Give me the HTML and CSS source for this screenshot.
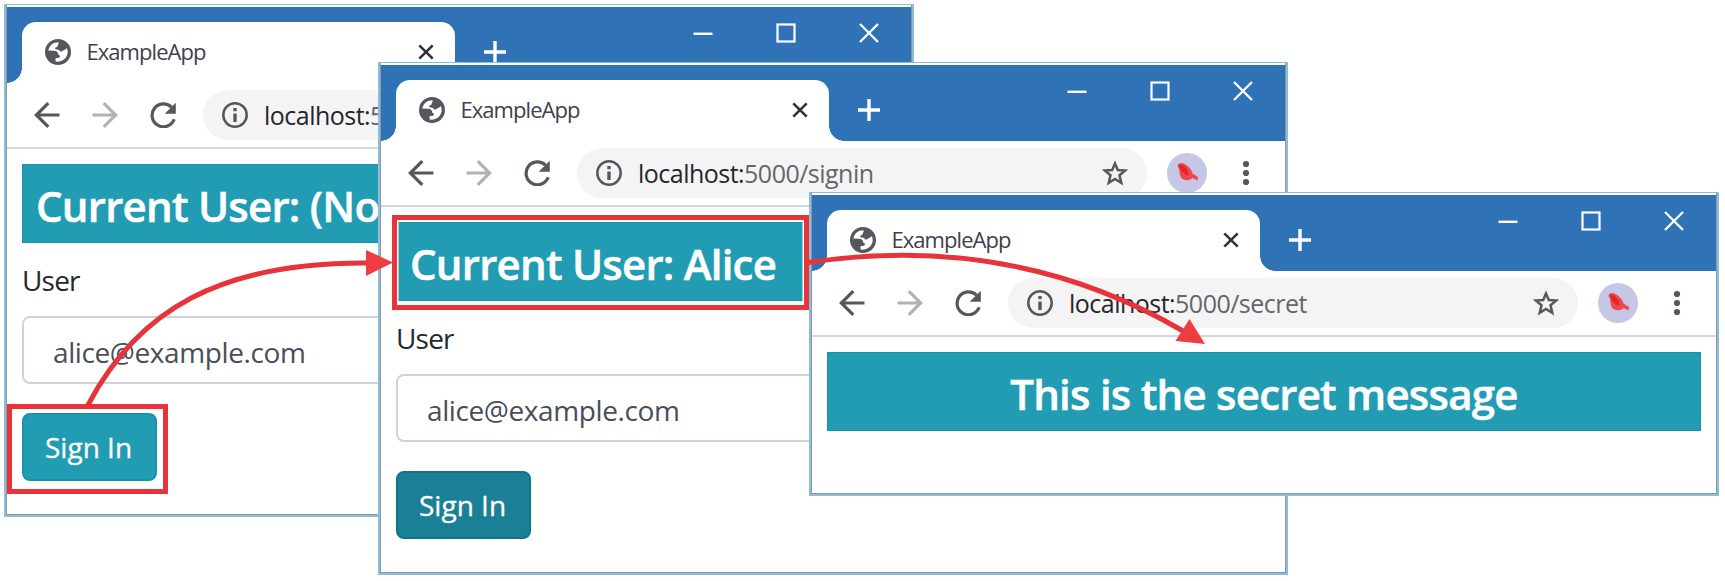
FILE: index.html
```html
<!DOCTYPE html>
<html lang="en">
<head>
<meta charset="utf-8">
<title>ExampleApp</title>
<link rel="stylesheet" href="styles.css">
</head>
<body>
<svg class="defs" aria-hidden="true">
  <symbol id="globe" viewBox="0 0 26 26">
    <circle cx="13" cy="13" r="13" fill="#54585d"/>
    <path d="M13.500 3.300C8 3.300 4.200 6.800 3.300 11.500L9 11.800C12 11.800 13.500 13.500 13.200 15.800C15.300 16 15.500 18 14 18.800L10.500 19.300 10.600 22.600C17 23.500 22.700 19 22.700 13C22.700 11.500 22.400 10.200 21.800 9C20.800 10.600 18.700 10.800 17.200 12.200C15.600 13 14.500 12.200 14 11C13 10.300 11.500 10.800 10.500 10C9.500 9 10.500 7.800 12.400 7.900C12.200 6 14.200 5.500 13.500 3.300Z" fill="#fff"/>
  </symbol>
  <symbol id="tab-close" viewBox="0 0 16 16"><path d="M1.300 1.300 14.700 14.700M14.700 1.300 1.300 14.700" stroke="#303338" stroke-width="2.600"/></symbol>
  <symbol id="plus" viewBox="0 0 22 22"><path d="M11 0V22M0 11H22" stroke="#fff" stroke-width="3.400"/></symbol>
  <symbol id="minimize" viewBox="0 0 20 20"><path d="M.5 10.800H19.500" stroke="#fff" stroke-width="2.400"/></symbol>
  <symbol id="maximize" viewBox="0 0 20 20"><rect x="1.500" y="1.500" width="17" height="17" fill="none" stroke="#fff" stroke-width="2.200"/></symbol>
  <symbol id="win-close" viewBox="0 0 20 20"><path d="M1 1 19 19M19 1 1 19" stroke="#fff" stroke-width="2.300"/></symbol>
  <symbol id="back" viewBox="0 0 26 26"><path d="M25.500 13H2M14.300 1.200 2.300 13 14.300 24.800" fill="none" stroke="currentColor" stroke-width="3.200"/></symbol>
  <symbol id="reload" viewBox="0 0 26 26"><path d="M24.200 17.300A11.400 11.400 0 1 1 21.500 5.200" fill="none" stroke="#54585d" stroke-width="3.200"/><path d="M25.800.7V11.800H14.700Z" fill="#54585d"/></symbol>
  <symbol id="info" viewBox="0 0 26 26"><circle cx="13" cy="13" r="11.700" fill="none" stroke="#54585d" stroke-width="2.500"/><path d="M13 11.500V20" stroke="#54585d" stroke-width="3.400"/><path d="M13 6V9.200" stroke="#54585d" stroke-width="3.400"/></symbol>
  <symbol id="star" viewBox="0 0 26 26"><path d="M13 3.500 15.800 10 23 10.600 17.500 15.300 19.300 22.800 13 18.900 6.700 22.800 8.500 15.300 3 10.600 10.200 10Z" fill="none" stroke="#54585d" stroke-width="2.500"/></symbol>
  <symbol id="bird" viewBox="0 0 40 40"><circle cx="20" cy="20" r="20" fill="#c5c7e4"/><path d="M10.500 13C11 10 14.500 9 17.500 11C21.500 13 24.500 16.500 25.500 20.500L31 24 30.500 27.500 25.500 25C22.500 28 16.500 28 14 24.500C12 21.500 13 18 11.800 15.500Z" fill="#ee484c"/><path d="M11.500 11.800C15.500 10.500 21.500 16 21.500 22.500C17.500 22.500 13.500 18.500 11.500 11.800Z" fill="#e4232c"/></symbol>
  <symbol id="more" viewBox="0 0 8 26"><circle cx="4" cy="4" r="3.100" fill="#54585d"/><circle cx="4" cy="13" r="3.100" fill="#54585d"/><circle cx="4" cy="22" r="3.100" fill="#54585d"/></symbol>
</svg>

<main class="canvas">
  <section class="window window-start">
    <header class="titlebar">
      <div class="tab"><svg class="icon"><use href="#globe"/></svg><span class="tab-title">ExampleApp</span><svg class="tab-x"><use href="#tab-close"/></svg></div>
      <svg class="new-tab"><use href="#plus"/></svg>
      <div class="controls"><svg><use href="#minimize"/></svg><svg><use href="#maximize"/></svg><svg><use href="#win-close"/></svg></div>
    </header>
    <nav class="toolbar">
      <svg class="icon"><use href="#back"/></svg><svg class="icon forward"><use href="#back"/></svg><svg class="icon"><use href="#reload"/></svg>
      <div class="address"><svg class="icon"><use href="#info"/></svg><span class="url"><b>localhost:</b>5</span><svg class="icon"><use href="#star"/></svg></div>
      <svg class="avatar"><use href="#bird"/></svg><svg class="more"><use href="#more"/></svg>
    </nav>
    <div class="page">
      <h1 class="banner"><span>Current User: (No</span></h1>
      <div class="label">User</div>
      <div class="field"><span>alice@example.com</span></div>
      <div class="button"><span>Sign In</span></div>
    </div>
  </section>

  <section class="window window-signed">
    <header class="titlebar">
      <div class="tab"><svg class="icon"><use href="#globe"/></svg><span class="tab-title">ExampleApp</span><svg class="tab-x"><use href="#tab-close"/></svg></div>
      <svg class="new-tab"><use href="#plus"/></svg>
      <div class="controls"><svg><use href="#minimize"/></svg><svg><use href="#maximize"/></svg><svg><use href="#win-close"/></svg></div>
    </header>
    <nav class="toolbar">
      <svg class="icon"><use href="#back"/></svg><svg class="icon forward"><use href="#back"/></svg><svg class="icon"><use href="#reload"/></svg>
      <div class="address"><svg class="icon"><use href="#info"/></svg><span class="url"><b>localhost:</b>5000/signin</span><svg class="icon"><use href="#star"/></svg></div>
      <svg class="avatar"><use href="#bird"/></svg><svg class="more"><use href="#more"/></svg>
    </nav>
    <div class="page">
      <h1 class="banner"><span>Current User: Alice</span></h1>
      <div class="label">User</div>
      <div class="field"><span>alice@example.com</span></div>
      <div class="button pressed"><span>Sign In</span></div>
    </div>
  </section>

  <section class="window window-secret">
    <header class="titlebar">
      <div class="tab"><svg class="icon"><use href="#globe"/></svg><span class="tab-title">ExampleApp</span><svg class="tab-x"><use href="#tab-close"/></svg></div>
      <svg class="new-tab"><use href="#plus"/></svg>
      <div class="controls"><svg><use href="#minimize"/></svg><svg><use href="#maximize"/></svg><svg><use href="#win-close"/></svg></div>
    </header>
    <nav class="toolbar">
      <svg class="icon"><use href="#back"/></svg><svg class="icon forward"><use href="#back"/></svg><svg class="icon"><use href="#reload"/></svg>
      <div class="address"><svg class="icon"><use href="#info"/></svg><span class="url"><b>localhost:</b>5000/secret</span><svg class="icon"><use href="#star"/></svg></div>
      <svg class="avatar"><use href="#bird"/></svg><svg class="more"><use href="#more"/></svg>
    </nav>
    <div class="page">
      <h1 class="banner centered"><span>This is the secret message</span></h1>
    </div>
  </section>

  <svg class="annotations" viewBox="0 0 1725 581">
    <g fill="none" stroke="#e6343a" stroke-width="5">
      <rect x="9.500" y="406.500" width="156" height="85"/>
      <rect x="397.500" y="220.500" width="406" height="84" stroke="#fff" stroke-width="2"/>
      <rect x="394.500" y="217.500" width="412" height="90"/>
      <path d="M88 405C138 310 220 262 368 263"/>
      <path d="M808 262.500C940 243 1065 262 1183 331"/>
    </g>
    <path d="M366 250 393 262.500 366 276Z" fill="#ee3d40"/>
    <path d="M1189.500 319 1205 344 1175.500 341Z" fill="#ee3d40"/>
  </svg>
</main>
</body>
</html>
```

FILE: styles.css
```css
* { box-sizing: border-box; }
body { margin: 0; background: #fff; font-family: "Open Sans", "Noto Sans", sans-serif; }
svg { display: block; flex: none; }
.defs { position: absolute; width: 0; height: 0; }
.canvas { position: relative; width: 1725px; height: 581px; overflow: hidden; }

.window {
  position: absolute;
  width: 910px;
  height: 513px;
  padding-top: 2px;
  background: #fff;
  border: 1px solid #8cbddb;
  border-width: 1px 2px 2px;
  overflow: hidden;
}
.window::after {
  content: "";
  position: absolute;
  inset: 0;
  border: solid #8998a3;
  border-width: 0 1px 1px;
}
.window-start { left: 4px; top: 4px; }
.window-signed { left: 378px; top: 62px; }
.window-secret { left: 809px; top: 192px; height: 304px; }

.titlebar {
  display: flex;
  align-items: flex-start;
  height: 76px;
  padding: 15px 0 0 16px;
  background: #2f72b5;
}
.tab {
  position: relative;
  display: flex;
  align-items: center;
  width: 433px;
  height: 61px;
  padding: 0 21px 1px 23px;
  background: #fff;
  border-radius: 14px 14px 0 0;
}
.tab::before, .tab::after {
  content: "";
  position: absolute;
  bottom: 0;
  width: 15px;
  height: 15px;
}
.tab::before { left: -15px; background: radial-gradient(circle at 0 0, #2f72b5 14.500px, #fff 15px); }
.tab::after { right: -15px; background: radial-gradient(circle at 100% 0, #2f72b5 14.500px, #fff 15px); }
.tab-title { margin: -2px 0 0 15.500px; font-size: 22px; letter-spacing: -.95px; color: #42404c; flex: 1; }
.icon { width: 26px; height: 26px; }
.tab-x { width: 16px; height: 16px; }
.new-tab { width: 22px; height: 22px; margin: 19px 0 0 29px; }
.controls { display: flex; gap: 63px; margin: 1px 0 0 187px; }
.controls svg { width: 20px; height: 20px; }

.toolbar {
  display: flex;
  align-items: center;
  height: 66px;
  padding-left: 28px;
  color: #54585d;
  border-bottom: 2px solid #d3d6dc;
}
.toolbar > .icon { margin-right: 32px; }
.toolbar > .forward { color: #b0b2b5; transform: scaleX(-1); }
.address {
  display: flex;
  align-items: center;
  width: 570px;
  height: 50px;
  margin-left: -5px;
  padding: 0 19px;
  background: #f4f4f5;
  border-radius: 25px;
}
.url { flex: 1; margin-left: 16px; font-size: 25px; letter-spacing: -.52px; color: #63666b; }
.url b { font-weight: 400; color: #25262b; }
.avatar { width: 40px; height: 40px; margin-left: 20px; }
.more { width: 8px; height: 26px; margin-left: 35px; }

.page { padding: 15px 16px; }
.banner {
  display: flex;
  height: 79px;
  margin: 0;
  padding-left: 13px;
  background: #219cb3;
  border: 1px solid #1594aa;
  color: #fff;
  font-size: 42px;
  line-height: 82px;
  font-weight: 600;
  letter-spacing: -.76px;
  -webkit-text-stroke: .5px #fff;
  white-space: nowrap;
}
.centered { justify-content: center; padding: 0; }
.label { height: 73px; font-size: 28px; line-height: 74px; letter-spacing: -.8px; color: #25282c; }
.field {
  height: 68px;
  padding-left: 29px;
  border: 2px solid #ced2d9;
  border-radius: 8px;
  font-size: 28px;
  line-height: 68px;
  letter-spacing: -.4px;
  color: #494e58;
}
.button {
  width: 135px;
  height: 68px;
  margin-top: 29px;
  padding-left: 21px;
  border: 2px solid #1594aa;
  border-radius: 8px;
  background: #219cb3;
  color: #fff;
  font-size: 28px;
  line-height: 65px;
  -webkit-text-stroke: .3px #fff;
}
.pressed { background: #1a8096; border-color: #107386; }
.annotations { position: absolute; inset: 0; width: 1725px; height: 581px; }
```
